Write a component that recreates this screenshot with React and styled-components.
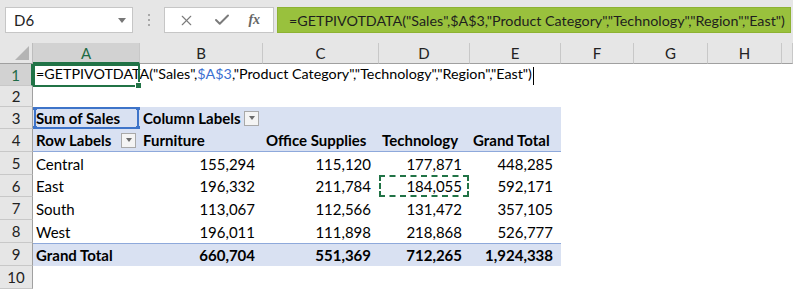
import React from "react";
import styled, { createGlobalStyle } from "styled-components";
import { X, Check } from "lucide-react";

const GlobalStyle = createGlobalStyle`
  html, body {
    margin: 0;
    padding: 0;
    background: #ffffff;
  }
  body {
    font-family: Lato, "Liberation Sans", sans-serif;
    color: #000;
  }
`;

const Window = styled.div`
  width: 793px;
  height: 291px;
  overflow: hidden;
  background: #fff;
`;

const Toolbar = styled.div`
  height: 43px;
  background: #e6e6e6;
  display: flex;
  align-items: flex-start;
  padding: 7px 2px 0 5px;
  box-sizing: border-box;
`;

const NameBox = styled.div`
  width: 128px;
  height: 26px;
  box-sizing: border-box;
  background: #fff;
  border: 1px solid #c6c6c6;
  display: flex;
  align-items: center;
  justify-content: space-between;
  padding: 0 6px 0 8px;
  font-size: 15px;
  color: #222;
`;

const Caret = styled.span`
  width: 0;
  height: 0;
  border-left: 4px solid transparent;
  border-right: 4px solid transparent;
  border-top: 5px solid #777;
`;

const Grip = styled.div`
  width: 31px;
  height: 26px;
  display: flex;
  flex-direction: column;
  align-items: center;
  justify-content: center;
  gap: 3px;
  span {
    width: 2px;
    height: 2px;
    background: #a8a8a8;
  }
`;

const FxButtons = styled.div`
  width: 110px;
  height: 26px;
  box-sizing: border-box;
  background: #fff;
  border: 1px solid #c6c6c6;
  display: flex;
  align-items: center;
  justify-content: space-around;
  padding: 0 4px;
  color: #7b7b7b;
`;

const FxLabel = styled.span`
  font-family: "Liberation Serif", serif;
  font-style: italic;
  font-weight: 700;
  font-size: 14px;
  color: #666;
`;

const FormulaInput = styled.div`
  flex: 1;
  margin-left: 3px;
  height: 26px;
  box-sizing: border-box;
  background: #99c13d;
  border: 1px solid #8db232;
  display: flex;
  align-items: center;
  padding-left: 11px;
  font-size: 14.3px;
  color: #1e1e1e;
  white-space: nowrap;
  overflow: hidden;
`;

const Sheet = styled.div`
  display: grid;
  grid-template-columns: 33px 107px 123px 116px 91px 91px 73px 74px 74px 1fr;
  grid-template-rows: 21px 22px 21px 22px 23px 23px 22px 23px 23px 23px 23px 23px;
`;

const Corner = styled.div`
  background: #e6e6e6;
  border-right: 1px solid #bdbdbd;
  border-bottom: 1px solid #a0a0a0;
  box-sizing: border-box;
  position: relative;
  &::after {
    content: "";
    position: absolute;
    right: 3px;
    bottom: 3px;
    border-left: 14px solid transparent;
    border-bottom: 14px solid #b4b4b4;
  }
`;

const ColHeader = styled.div`
  background: ${(p) => (p.$active ? "#d2d2d2" : "#e6e6e6")};
  color: ${(p) => (p.$active ? "#1e6b45" : "#222")};
  border-right: 1px solid #c8c8c8;
  border-bottom: ${(p) => (p.$active ? "2px solid #217346" : "1px solid #a0a0a0")};
  box-sizing: border-box;
  display: flex;
  align-items: center;
  justify-content: center;
  font-size: 15px;
`;

const RowHeader = styled.div`
  background: ${(p) => (p.$active ? "#d2d2d2" : "#e6e6e6")};
  color: ${(p) => (p.$active ? "#1e6b45" : "#222")};
  border-right: ${(p) => (p.$active ? "2px solid #217346" : "1px solid #a0a0a0")};
  border-bottom: 1px solid #c8c8c8;
  box-sizing: border-box;
  display: flex;
  align-items: center;
  justify-content: center;
  font-size: 15px;
`;

const Cell = styled.div`
  position: relative;
  box-sizing: border-box;
  display: flex;
  align-items: center;
  justify-content: ${(p) => (p.$align === "right" ? "flex-end" : "flex-start")};
  padding: ${(p) => (p.$align === "right" ? "0 8px 0 4px" : "0 4px 0 3px")};
  background: ${(p) => p.$bg || "transparent"};
  font-weight: ${(p) => (p.$bold ? 700 : 400)};
  font-size: ${(p) => (p.$formula ? "14.3px" : "15px")};
  white-space: nowrap;
  overflow: ${(p) => (p.$formula ? "visible" : "hidden")};
  z-index: ${(p) => (p.$formula ? 2 : "auto")};
  border-top: ${(p) => (p.$ruleTop ? "1px solid #8ea9db" : "none")};
  border-bottom: ${(p) => (p.$ruleBottom ? "1px solid #8ea9db" : "none")};
`;

const RefText = styled.span`
  color: #3a6fd1;
`;

const EditCursor = styled.span`
  display: inline-block;
  width: 1px;
  height: 18px;
  background: #000;
  margin-left: 1px;
  vertical-align: middle;
`;

const ActiveFrame = styled.div`
  position: absolute;
  inset: 0 0 -1px 0;
  border: 2px solid #217346;
  pointer-events: none;
  &::after {
    content: "";
    position: absolute;
    right: -4px;
    bottom: -4px;
    width: 5px;
    height: 5px;
    background: #217346;
    border: 1px solid #fff;
  }
`;

const PivotFrame = styled.div`
  position: absolute;
  inset: 0 1px 0 1px;
  border: 2px solid #3e74c9;
  pointer-events: none;
`;

const Handle = styled.span`
  position: absolute;
  width: 5px;
  height: 5px;
  background: #3e74c9;
  ${(p) => (p.$top ? "top: -4px;" : "bottom: -4px;")}
  ${(p) => (p.$left ? "left: -4px;" : "right: -4px;")}
`;

const CopyFrame = styled.div`
  position: absolute;
  inset: 0 1px 0 0;
  border: 2px dashed #217346;
  pointer-events: none;
`;

const FilterButton = styled.span`
  width: 15px;
  height: 15px;
  box-sizing: border-box;
  border: 1px solid #a9a9a9;
  background: #f4f4f4;
  margin-left: auto;
  display: flex;
  align-items: center;
  justify-content: center;
  &::after {
    content: "";
    border-left: 3px solid transparent;
    border-right: 3px solid transparent;
    border-top: 4px solid #6b6b6b;
  }
`;

const PIVOT_BG = "#d9e1f2";
const COLS = ["A", "B", "C", "D", "E", "F", "G", "H", "I"];

const data = [
  ["Central", "155,294", "115,120", "177,871", "448,285"],
  ["East", "196,332", "211,784", "184,055", "592,171"],
  ["South", "113,067", "112,566", "131,472", "357,105"],
  ["West", "196,011", "111,898", "218,868", "526,777"],
];
const totals = ["Grand Total", "660,704", "551,369", "712,265", "1,924,338"];

const Empty = ({ n }) =>
  Array.from({ length: n }).map((_, i) => <Cell key={"e" + i} />);

export default function App() {
  return (
    <Window>
      <GlobalStyle />
      <Toolbar>
        <NameBox>
          D6
          <Caret />
        </NameBox>
        <Grip>
          <span />
          <span />
          <span />
        </Grip>
        <FxButtons>
          <X size={17} strokeWidth={1.6} />
          <Check size={18} strokeWidth={2.6} />
          <FxLabel>fx</FxLabel>
        </FxButtons>
        <FormulaInput>
          =GETPIVOTDATA("Sales",$A$3,"Product Category","Technology","Region","East")
        </FormulaInput>
      </Toolbar>

      <Sheet>
        <Corner />
        {COLS.map((c) => (
          <ColHeader key={c} $active={c === "A"}>
            {c !== "I" ? c : ""}
          </ColHeader>
        ))}

        {/* row 1 */}
        <RowHeader $active>1</RowHeader>
        <Cell $formula>
          <span>
            =GETPIVOTDATA("Sales",<RefText>$A$3</RefText>,"Product Category","Technology","Region","East")
            <EditCursor />
          </span>
          <ActiveFrame />
        </Cell>
        <Empty n={8} />

        {/* row 2 */}
        <RowHeader>2</RowHeader>
        <Empty n={9} />

        {/* row 3 */}
        <RowHeader>3</RowHeader>
        <Cell $bg={PIVOT_BG} $bold>
          Sum of Sales
          <PivotFrame>
            <Handle $top $left />
            <Handle $top />
            <Handle $left />
            <Handle />
          </PivotFrame>
        </Cell>
        <Cell $bg={PIVOT_BG} $bold>
          Column Labels
          <FilterButton />
        </Cell>
        <Cell $bg={PIVOT_BG} />
        <Cell $bg={PIVOT_BG} />
        <Cell $bg={PIVOT_BG} />
        <Empty n={4} />

        {/* row 4 */}
        <RowHeader>4</RowHeader>
        <Cell $bg={PIVOT_BG} $bold $ruleBottom>
          Row Labels
          <FilterButton />
        </Cell>
        {["Furniture", "Office Supplies", "Technology", "Grand Total"].map((h) => (
          <Cell key={h} $bg={PIVOT_BG} $bold $ruleBottom>
            {h}
          </Cell>
        ))}
        <Empty n={4} />

        {/* rows 5-8 */}
        {data.map((row, r) => (
          <React.Fragment key={row[0]}>
            <RowHeader>{r + 5}</RowHeader>
            {row.map((v, i) => (
              <Cell key={i} $align={i === 0 ? "left" : "right"}>
                {v}
                {r === 1 && i === 3 && <CopyFrame />}
              </Cell>
            ))}
            <Empty n={4} />
          </React.Fragment>
        ))}

        {/* row 9 */}
        <RowHeader>9</RowHeader>
        {totals.map((v, i) => (
          <Cell key={i} $bg={PIVOT_BG} $bold $ruleTop $align={i === 0 ? "left" : "right"}>
            {v}
          </Cell>
        ))}
        <Empty n={4} />

        {/* row 10 */}
        <RowHeader>10</RowHeader>
        <Empty n={9} />
      </Sheet>
    </Window>
  );
}
